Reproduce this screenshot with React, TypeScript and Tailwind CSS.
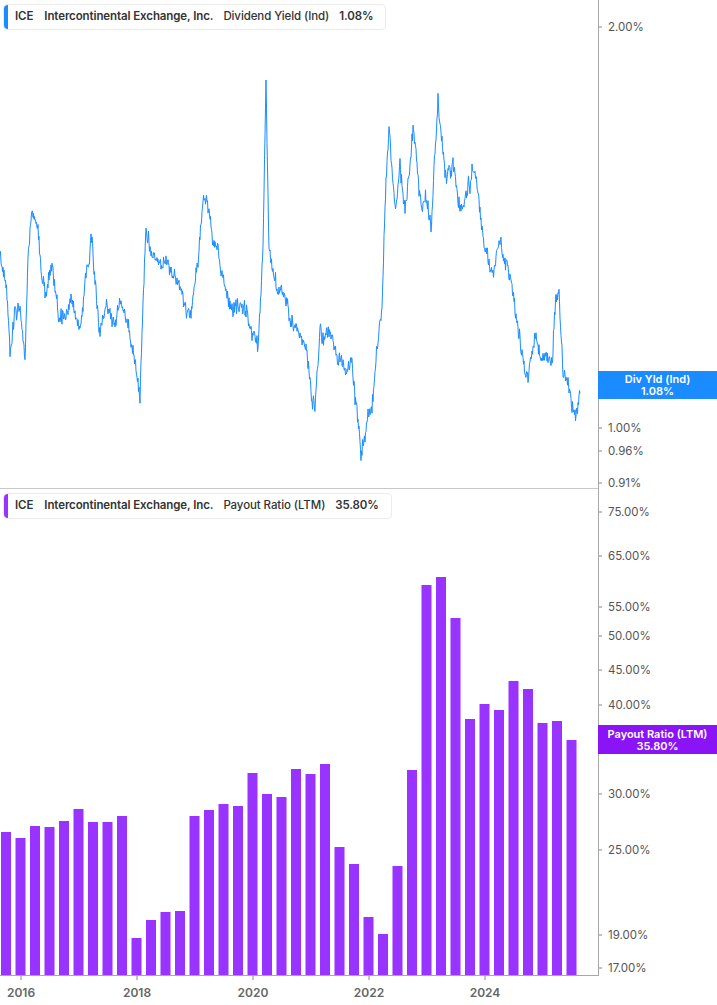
import React from "react";

const keys: [number, number][] = [
  [0, 260], [6, 290], [10, 350], [15, 300], [20, 310], [25, 355], [28, 250], [32, 210], [38, 230], [42, 280], [46, 290], [52, 260], [58, 310], [65, 320], [72, 300], [80, 330], [86, 280], [92, 240], [100, 330], [106, 300], [112, 320], [120, 300], [128, 330], [135, 360], [140, 395], [143, 300], [146, 220], [152, 250], [160, 260], [170, 270], [180, 290], [190, 320], [198, 260], [203, 200], [206, 190], [212, 230], [218, 250], [226, 300], [232, 320], [240, 310], [248, 320], [258, 350], [263, 250], [266, 90], [269, 260], [274, 280], [285, 300], [292, 320], [300, 330], [306, 350], [312, 400], [315, 410], [320, 340], [330, 330], [338, 360], [345, 370], [352, 370], [356, 400], [361, 450], [366, 430], [372, 410], [377, 350], [382, 300], [386, 180], [389, 130], [395, 200], [400, 160], [405, 210], [410, 160], [413, 130], [420, 200], [427, 200], [431, 230], [435, 150], [438, 100], [442, 140], [446, 180], [453, 170], [460, 210], [468, 190], [475, 160], [480, 210], [486, 260], [493, 270], [500, 250], [505, 260], [511, 270], [516, 320], [522, 350], [528, 380], [535, 350], [545, 360], [552, 370], [556, 300], [559, 300], [563, 370], [568, 380], [573, 400], [577, 415], [580, 385],
];

function buildLine() {
  let seed = 11;
  const rnd = () => {
    seed = (seed * 16807) % 2147483647;
    return seed / 2147483647 - 0.5;
  };
  const pts: string[] = [];
  let k = 0;
  let drift = 0;
  for (let x = 0; x <= 580; x += 0.5) {
    while (k < keys.length - 2 && keys[k + 1][0] < x) k++;
    const [x0, y0] = keys[k];
    const [x1, y1] = keys[k + 1];
    const t = Math.min(1, Math.max(0, (x - x0) / (x1 - x0)));
    drift = drift * 0.85 + rnd() * 9;
    const y = y0 + (y1 - y0) * t + drift + rnd() * 12;
    pts.push(`${x.toFixed(1)},${y.toFixed(1)}`);
  }
  return "M" + pts.join(" L");
}

const bars = [832, 838, 826, 827, 821, 809, 822, 822, 816, 938, 920, 912, 911, 816, 810, 804, 806, 773, 794, 797, 769, 774, 764, 847, 864, 917, 934, 866, 770, 585, 577, 618, 719, 704, 710, 681, 689, 723, 721, 740];

const topTicks: [string, number][] = [["2.00%", 27], ["1.00%", 428], ["0.96%", 451], ["0.91%", 483]];
const botTicks: [string, number][] = [["75.00%", 512], ["65.00%", 556], ["55.00%", 607], ["50.00%", 636], ["45.00%", 670], ["40.00%", 705], ["30.00%", 794], ["25.00%", 850], ["19.00%", 935], ["17.00%", 968]];
const years: [string, number][] = [["2016", 21], ["2018", 137], ["2020", 253], ["2022", 369], ["2024", 485]];

function Legend({ color, label, value }: { color: string; label: string; value: string }) {
  return (
    <div className="flex h-[26px] items-center rounded border border-[#ececec] bg-white pr-[12px] text-[11.5px] font-semibold tracking-[-0.1px] text-[#333]">
      <span className="h-full w-[4px] rounded-l" style={{ background: color }} />
      <span className="ml-[7px]">ICE</span>
      <span className="ml-[11px]">Intercontinental Exchange, Inc.</span>
      <span className="ml-[10px] font-medium">{label}</span>
      <span className="ml-[10px]">{value}</span>
    </div>
  );
}

export default function App() {
  const line = buildLine();
  return (
    <div className="relative h-[1005px] w-[717px] overflow-hidden bg-white" style={{ fontFamily: "Inter, 'Noto Sans', sans-serif" }}>
      <svg width="717" height="1005" className="absolute left-0 top-0">
        <line x1="0" x2="598" y1="488.5" y2="488.5" stroke="#c8c8c8" />
        <line x1="598.5" x2="598.5" y1="0" y2="976" stroke="#a8a8a8" />
        <line x1="0" x2="598" y1="975.5" y2="975.5" stroke="#a8a8a8" />
        <path d={line} fill="none" stroke="#1a8cff" strokeWidth="1" strokeLinejoin="round" />
        {bars.map((y, i) => (
          <rect key={i} x={1 + i * 14.5} y={y} width={10} height={975 - y} fill="#9933ff" />
        ))}
        {[...topTicks, ...botTicks].map(([t, y]) => (
          <g key={t + y}>
            <line x1="599" x2="602" y1={y} y2={y} stroke="#888" />
            <text x="608" y={y + 4} fontSize="11.5" fill="#555">{t}</text>
          </g>
        ))}
        {years.map(([t, x]) => (
          <g key={t}>
            <line x1={x} x2={x} y1="976" y2="980" stroke="#888" />
            <text x={x} y="997" fontSize="12" fontWeight="600" fill="#666" textAnchor="middle">{t}</text>
          </g>
        ))}
      </svg>
      <div className="absolute left-[3px] top-[4px]">
        <Legend color="#1a8cff" label="Dividend Yield (Ind)" value="1.08%" />
      </div>
      <div className="absolute left-[3px] top-[493px]">
        <Legend color="#9933ff" label="Payout Ratio (LTM)" value="35.80%" />
      </div>
      <div className="absolute left-[598px] top-[371px] flex h-[28px] w-[119px] flex-col items-center justify-center bg-[#1a8cff] text-[11px] font-semibold leading-[12px] text-white">
        <span>Div Yld (Ind)</span>
        <span>1.08%</span>
      </div>
      <div className="absolute left-[598px] top-[725px] flex h-[29px] w-[119px] flex-col items-center justify-center bg-[#8a14f5] text-[11px] font-semibold leading-[12px] text-white">
        <span>Payout Ratio (LTM)</span>
        <span>35.80%</span>
      </div>
    </div>
  );
}
